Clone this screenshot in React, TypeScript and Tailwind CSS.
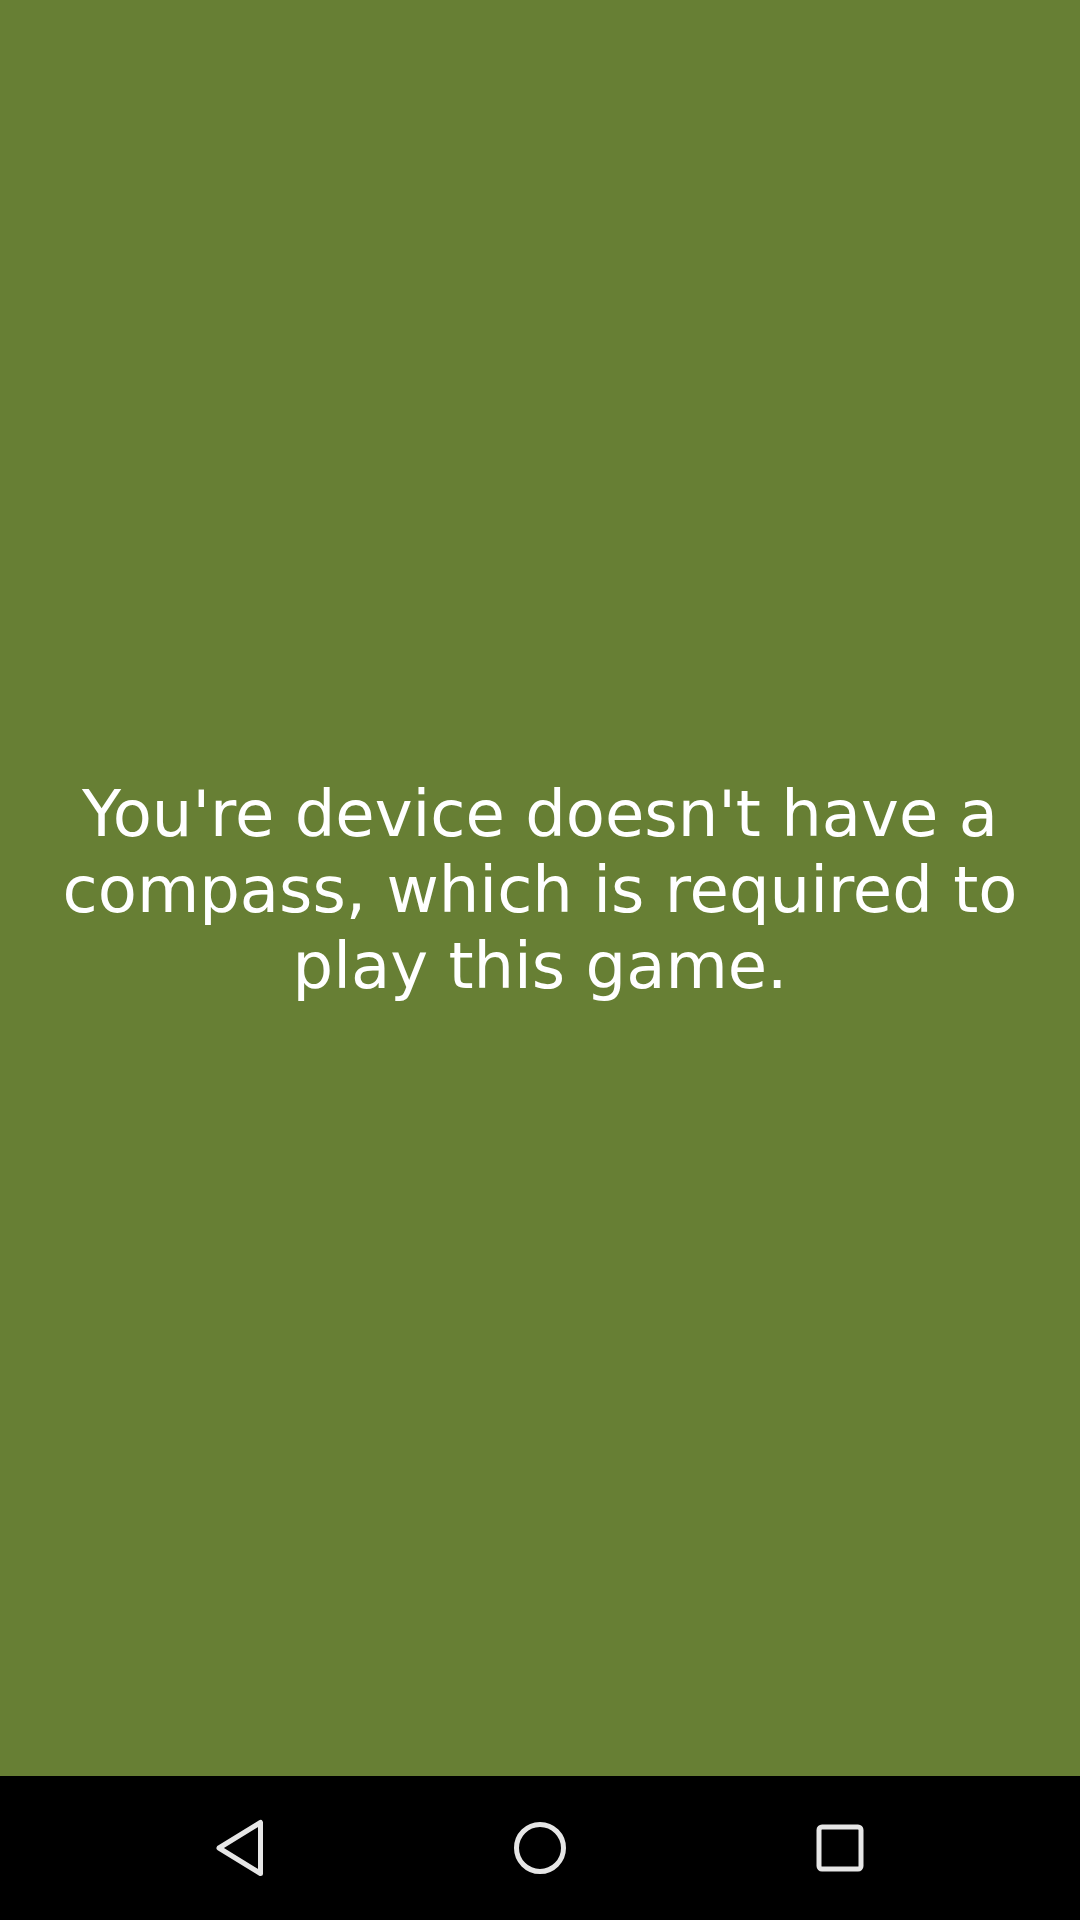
export default function App() {
  return (
    <div className="w-[1080px] h-[1920px] flex flex-col bg-black" style={{ fontFamily: '"DejaVu Sans", sans-serif' }}>
      <div className="flex-1 bg-[#677f34] flex items-center justify-center px-[30px]">
        <p className="text-white text-center text-[64px] leading-[76px] mt-[4px]">
          You're device doesn't have a compass, which is required to play this game.
        </p>
      </div>
      <div className="h-[144px] bg-black flex items-center justify-center gap-[180px]">
        <div className="w-[120px] flex justify-center">
          <svg width="60" height="60" viewBox="0 0 60 60">
            <path d="M 50.5 4.5 L 50.5 55.5 L 9 30 Z" fill="none" stroke="#e6e6e6" strokeWidth="5" strokeLinejoin="round" />
          </svg>
        </div>
        <div className="w-[120px] flex justify-center">
          <svg width="60" height="60" viewBox="0 0 60 60">
            <circle cx="30" cy="30" r="23.5" fill="none" stroke="#e6e6e6" strokeWidth="5" />
          </svg>
        </div>
        <div className="w-[120px] flex justify-center">
          <svg width="60" height="60" viewBox="0 0 60 60">
            <rect x="9" y="9" width="42" height="42" rx="3" fill="none" stroke="#e6e6e6" strokeWidth="5" />
          </svg>
        </div>
      </div>
    </div>
  );
}
